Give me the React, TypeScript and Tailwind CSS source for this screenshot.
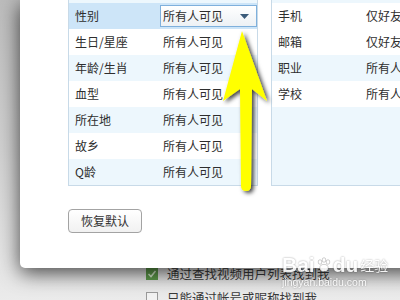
import React from 'react';

type Row = {
  label: string;
  value: string;
  bg: string;
  select?: boolean;
};

const leftRows: Row[] = [
  { label: '性别', value: '所有人可见', bg: 'bg-[#cde5f8]', select: true },
  { label: '生日/星座', value: '所有人可见', bg: 'bg-white' },
  { label: '年龄/生肖', value: '所有人可见', bg: 'bg-[#edf7fd]' },
  { label: '血型', value: '所有人可见', bg: 'bg-white' },
  { label: '所在地', value: '所有人可见', bg: 'bg-[#edf7fd]' },
  { label: '故乡', value: '所有人可见', bg: 'bg-white' },
  { label: 'Q龄', value: '所有人可见', bg: 'bg-[#edf7fd]' },
];

const rightRows: Row[] = [
  { label: '手机', value: '仅好友可见', bg: 'bg-white' },
  { label: '邮箱', value: '仅好友可见', bg: 'bg-white' },
  { label: '职业', value: '所有人可见', bg: 'bg-[#edf7fd]' },
  { label: '学校', value: '所有人可见', bg: 'bg-white' },
];

const TableRow = ({ row }: { row: Row }) => (
  <div className={`flex h-[26px] items-center ${row.bg}`}>
    <div className="w-[91px] shrink-0 pl-[6px]">{row.label}</div>
    {row.select ? (
      <div className="flex h-[22px] flex-1 items-center justify-between border border-[#7fb0dc] bg-gradient-to-b from-white to-[#edf1f5] pl-[2px] pr-[7px]">
        <span>{row.value}</span>
        <svg width="9" height="5" viewBox="0 0 9 5">
          <path d="M0 0 L9 0 L4.5 5 Z" fill="#3b5b7a" />
        </svg>
      </div>
    ) : (
      <div className="flex-1 whitespace-nowrap pl-[3px]">{row.value}</div>
    )}
  </div>
);

const App = () => {
  return (
    <div className="relative h-[300px] w-[400px] overflow-hidden bg-gradient-to-b from-[#bcbcbc] via-[#d0d0d0] to-[#ebebeb] font-['Noto_Sans_CJK_SC',sans-serif] text-[12px] text-[#2e2e2e]">
      {/* window underneath */}
      <div className="flex flex-col gap-[8px] pl-[146px] pt-[266px] text-[12.5px] text-[#3a3a3a]">
        <div className="flex h-[16px] items-center gap-[9px]">
          <div className="flex h-[12px] w-[12px] items-center justify-center bg-[#5f9d4c]">
            <svg width="10" height="10" viewBox="0 0 10 10">
              <path d="M1.5 5 L4 7.5 L8.5 2" stroke="#d9efcf" strokeWidth="1.6" fill="none" />
            </svg>
          </div>
          <span className="whitespace-nowrap">通过查找视频用户列表找到我</span>
        </div>
        <div className="flex h-[16px] items-center gap-[9px]">
          <div className="h-[12px] w-[12px] border border-[#9a9a9a] bg-[#f2f2f2]" />
          <span className="whitespace-nowrap">只能通过帐号或昵称找到我</span>
        </div>
      </div>

      {/* dialog */}
      <div className="absolute left-[20px] top-0 h-[268px] w-[420px] rounded-bl-[5px] bg-white pl-[48px] shadow-[0_5px_20px_rgba(0,0,0,0.7)]">
        <div className="flex gap-[13px]">
          <div className="w-[190px] shrink-0 border-x border-b border-[#c8dae8]">
            <div className="h-[3px] bg-[#edf7fd]" />
            {leftRows.map((row) => (
              <TableRow key={row.label} row={row} />
            ))}
          </div>
          <div className="w-[200px] shrink-0 border-x border-b border-[#c8dae8]">
            <div className="h-[3px] bg-[#edf7fd]" />
            {rightRows.map((row) => (
              <TableRow key={row.label} row={row} />
            ))}
            <div className="h-[78px] bg-[#edf7fd]" />
          </div>
        </div>
        <button className="mt-[23px] h-[24px] w-[74px] rounded-[4px] border border-[#a3a3a3] bg-gradient-to-b from-white to-[#f1f1f1] text-[12px] text-[#333]">
          恢复默认
        </button>
      </div>

      {/* yellow arrow */}
      <svg className="absolute left-0 top-0" width="400" height="300" viewBox="0 0 400 300">
        <defs>
          <filter id="sh" x="-50%" y="-20%" width="200%" height="140%">
            <feDropShadow dx="2.5" dy="2" stdDeviation="2" floodColor="#000" floodOpacity="0.75" />
          </filter>
        </defs>
        <path
          d="M242 31 L267 101 L252 89 L251 186 Q251 191 246 191 Q241 191 241 186 L240 89 L223 101 Z"
          fill="#ffff00"
          filter="url(#sh)"
        />
      </svg>

      {/* watermark */}
      <div className="absolute left-[282px] top-[254px] flex flex-col items-start text-white opacity-90 [text-shadow:0_0_2px_rgba(0,0,0,0.45)]">
        <div className="flex items-center font-['Liberation_Sans',sans-serif] text-[21px] font-bold leading-[22px]">
          <span>Bai</span>
          <svg width="16" height="16" viewBox="0 0 16 16" className="mx-[1px]">
            <g fill="#fff" stroke="rgba(0,0,0,0.35)" strokeWidth="0.6">
              <ellipse cx="4" cy="5" rx="1.8" ry="2.3" />
              <ellipse cx="8" cy="3" rx="1.8" ry="2.3" />
              <ellipse cx="12" cy="5" rx="1.8" ry="2.3" />
              <ellipse cx="8" cy="11" rx="4.2" ry="3.6" />
            </g>
          </svg>
          <span>du</span>
          <span className="ml-[2px] font-['Noto_Sans_CJK_SC',sans-serif] text-[14px] font-normal">经验</span>
        </div>
        <span className="font-['Liberation_Sans',sans-serif] text-[10.5px] leading-[12px]">jingyan.baidu.com</span>
      </div>
    </div>
  );
};

export default App;
